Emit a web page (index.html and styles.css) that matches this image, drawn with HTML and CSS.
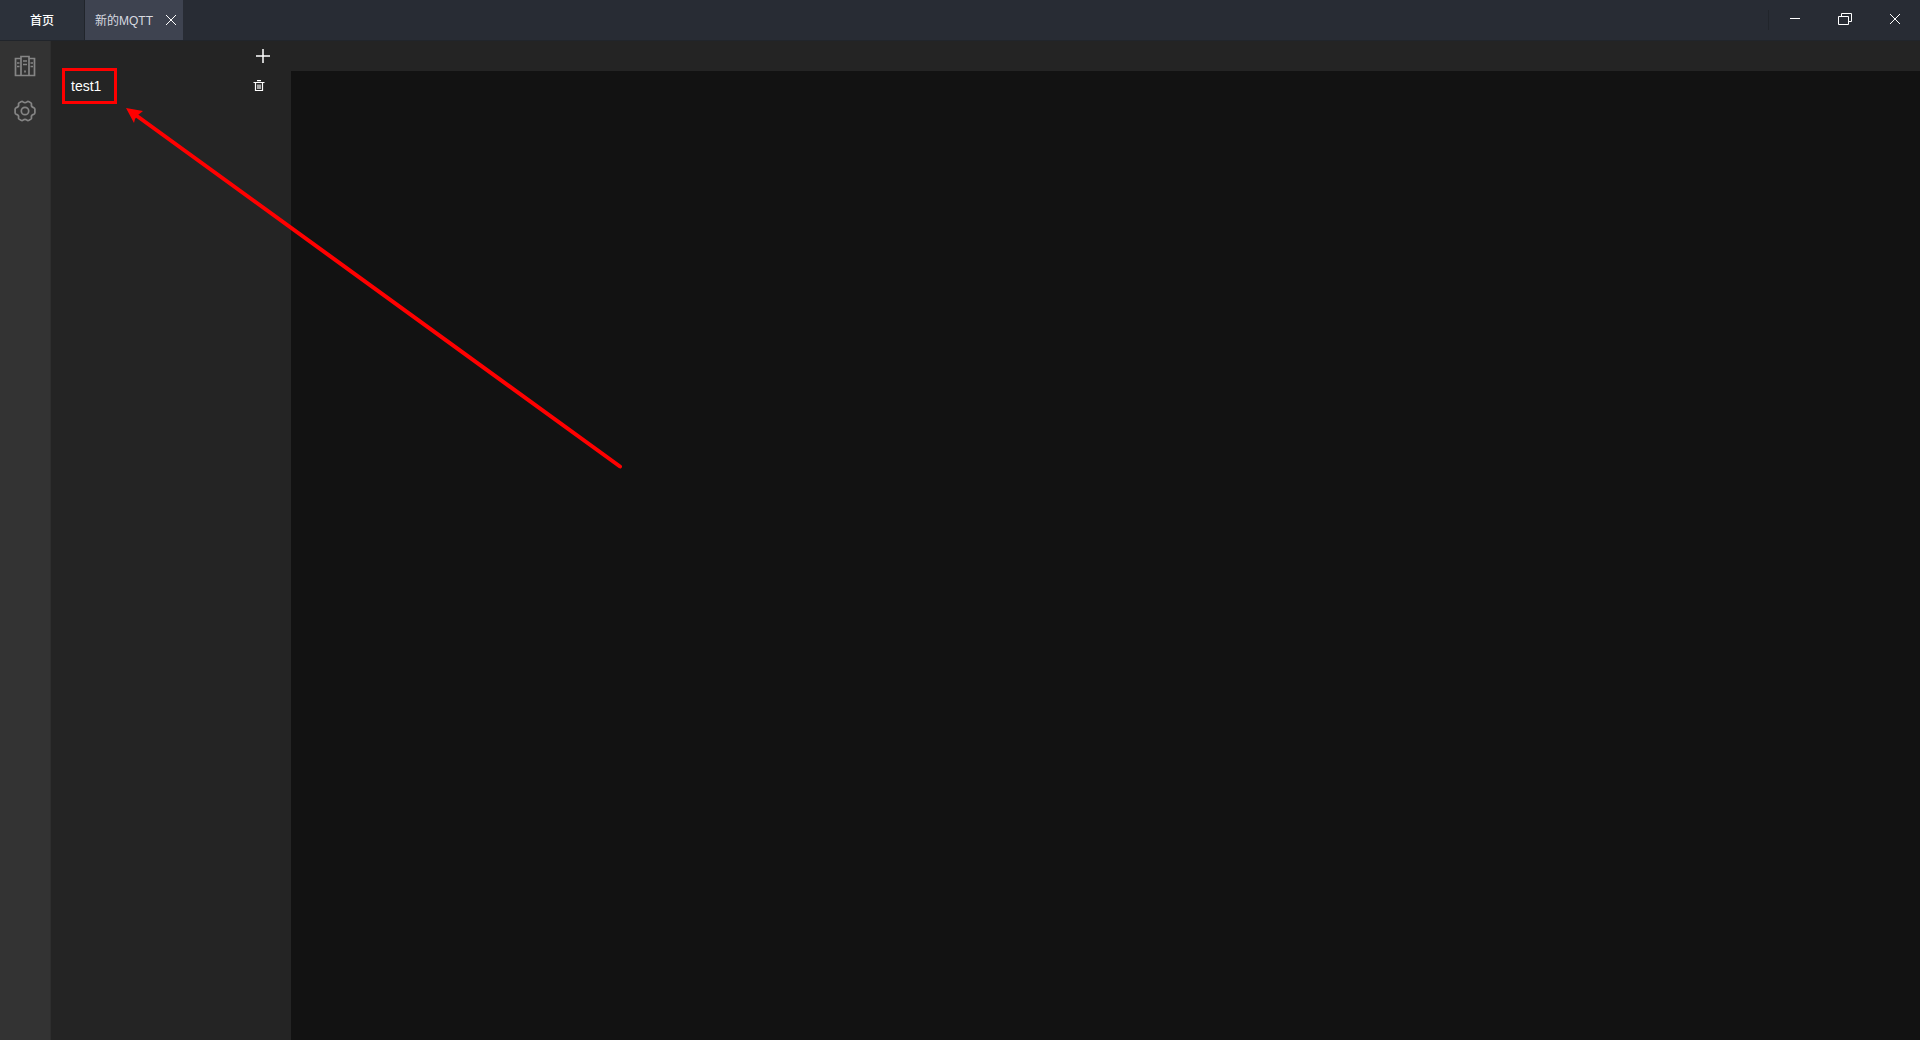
FILE: index.html
```html
<!DOCTYPE html>
<html lang="zh-CN">
<head>
    <meta charset="UTF-8">
    <meta name="viewport" content="width=device-width, initial-scale=1.0">
    <title>新的MQTT</title>
    <link rel="stylesheet" href="styles.css">
</head>
<body>
    <header class="titlebar">
        <nav class="tabs">
            <button class="tab tab-home">首页</button>
            <div class="tab tab-active">
                <button class="tab-name">新的MQTT</button>
                <button class="tab-close" aria-label="关闭标签">
                    <svg width="12" height="12" viewBox="0 0 12 12"><path d="M1 1l10 10M11 1L1 11"/></svg>
                </button>
            </div>
        </nav>
        <div class="window-controls">
            <button aria-label="最小化">
                <svg width="14" height="14" viewBox="0 0 14 14"><path d="M2 6.500h10"/></svg>
            </button>
            <button aria-label="还原">
                <svg width="14" height="14" viewBox="0 0 14 14"><path d="M.5 4.500h10v8H.5zM3.500 4.500v-3h10v8h-3"/></svg>
            </button>
            <button aria-label="关闭">
                <svg width="14" height="14" viewBox="0 0 14 14"><path d="M2 2l10 10M12 2L2 12"/></svg>
            </button>
        </div>
    </header>

    <div class="layout">
        <aside class="sidebar">
            <button aria-label="连接">
                <svg width="22" height="22" viewBox="0 0 22 22">
                    <path d="M7 3.500H1.500v17h19v-17H15M7 20.500v-19h8v19M3 8h2.500M3 11.500h2.500M9 6h4M9 9.500h4M16.500 8H19M16.500 11.500H19M11 15.500v2"/>
                </svg>
            </button>
            <button aria-label="设置">
                <svg width="22" height="22" viewBox="0 0 22 22">
                    <path d="M7 1.700Q8.200 1 9 1.900Q11 3.500 13 1.900Q13.800 1 15 1.700L16.900 2.900Q17.800 3.500 17.400 4.700Q17.100 7 19.600 7.600Q20.900 8 20.900 9.200V12.800Q20.900 14 19.600 14.400Q17.100 15 17.400 17.300Q17.800 18.500 16.900 19.100L15 20.300Q13.800 21 13 20.100Q11 18.500 9 20.100Q8.200 21 7 20.300L5.100 19.100Q4.200 18.500 4.600 17.300Q4.900 15 2.400 14.400Q1.100 14 1.100 12.800V9.200Q1.100 8 2.400 7.600Q4.900 7 4.600 4.700Q4.200 3.500 5.100 2.900Z"/>
                    <circle cx="11" cy="11" r="3.700"/>
                </svg>
            </button>
        </aside>

        <section class="connections">
            <div class="toolbar">
                <button aria-label="新建连接">
                    <svg width="14" height="14" viewBox="0 0 14 14"><path d="M7 0v14M0 7h14"/></svg>
                </button>
            </div>
            <ul class="connection-list">
                <li>
                    <button class="connection-name">test1</button>
                    <button class="delete" aria-label="删除">
                        <svg width="12" height="12" viewBox="0 0 12 12"><path d="M4 .7h4M.5 2.500h11M2.500 2.500v8h7v-8M5 4.500v4.500M7 4.500v4.500"/></svg>
                    </button>
                </li>
            </ul>
        </section>

        <main class="workspace">
            <div class="workspace-bar"></div>
            <div class="workspace-content"></div>
        </main>
    </div>

    <!-- 标注 -->
    <div class="mark-box"></div>
    <svg class="mark-arrow" width="500" height="364" viewBox="0 0 500 364">
        <path class="line" d="M11 8L494 358.500"/>
        <path class="head" d="M0 0L17 3L12 7L9 11L8 15Z"/>
    </svg>
</body>
</html>
```
FILE: styles.css
```css
* {
    box-sizing: border-box;
}

body {
    margin: 0;
    height: 100vh;
    display: flex;
    flex-direction: column;
    overflow: hidden;
    background-color: #121212;
    color: #fff;
    font-family: "Liberation Sans", "Noto Sans CJK SC", sans-serif;
    font-size: 12px;
}

button {
    display: flex;
    align-items: center;
    justify-content: center;
    padding: 0;
    border: none;
    background: none;
    color: inherit;
    font: inherit;
    cursor: pointer;
}

svg {
    display: block;
    fill: none;
    stroke: currentColor;
}

/* 标题栏 */
.titlebar {
    display: flex;
    justify-content: space-between;
    height: 41px;
    background-color: #282c34;
    border-bottom: 1px solid #21252b;
}

.tabs {
    display: flex;
}

.tab {
    display: flex;
    align-items: center;
    height: 40px;
}

.tab-home {
    width: 85px;
    padding: 0 0 2px;
    background-color: #2c313a;
    border-right: 1px solid #21252b;
    font-weight: 500;
}

.tab-active {
    gap: 12px;
    padding: 0 6px 0 10px;
    background-color: #3e4350;
    color: #d7dae0;
}

.tab-name {
    padding-bottom: 2px;
}

.tab-close {
    color: #fff;
}

.window-controls {
    display: flex;
}

.window-controls::before {
    content: "";
    width: 1px;
    height: 20px;
    margin: 10px 1px 0 0;
    background-color: #21252b;
}

.window-controls button {
    width: 50px;
    height: 38px;
}

/* 主体 */
.layout {
    flex: 1;
    display: flex;
}

.sidebar {
    display: flex;
    flex-direction: column;
    align-items: center;
    gap: 23px;
    width: 51px;
    padding-top: 14px;
    background-color: #333;
    border-right: 1px solid #2e2e2e;
    color: #858585;
}

.sidebar svg {
    stroke-width: 1.7;
}

.connections {
    width: 240px;
    background-color: #242424;
}

.toolbar {
    display: flex;
    justify-content: flex-end;
    height: 30px;
    padding: 0 21px;
}

.toolbar svg {
    stroke-width: 1.5;
}

.connection-list {
    margin: 0;
    padding: 0;
    list-style: none;
}

.connection-list li {
    display: flex;
    align-items: center;
    justify-content: space-between;
    height: 30px;
    padding: 0 26px 0 20px;
}

.connection-name {
    font-size: 14px;
}

.delete svg {
    stroke-width: 1.2;
}

.workspace {
    flex: 1;
    display: flex;
    flex-direction: column;
}

.workspace-bar {
    height: 30px;
    background-color: #242424;
}

.workspace-content {
    flex: 1;
    background-color: #121212;
}

/* 标注 */
.mark-box {
    position: absolute;
    top: 68px;
    left: 62px;
    width: 55px;
    height: 36px;
    border: 3px solid #f00;
}

.mark-arrow {
    position: absolute;
    top: 108px;
    left: 126px;
    pointer-events: none;
}

.mark-arrow .line {
    stroke: #f00;
    stroke-width: 4;
    stroke-linecap: round;
}

.mark-arrow .head {
    fill: #f00;
    stroke: none;
}
```
